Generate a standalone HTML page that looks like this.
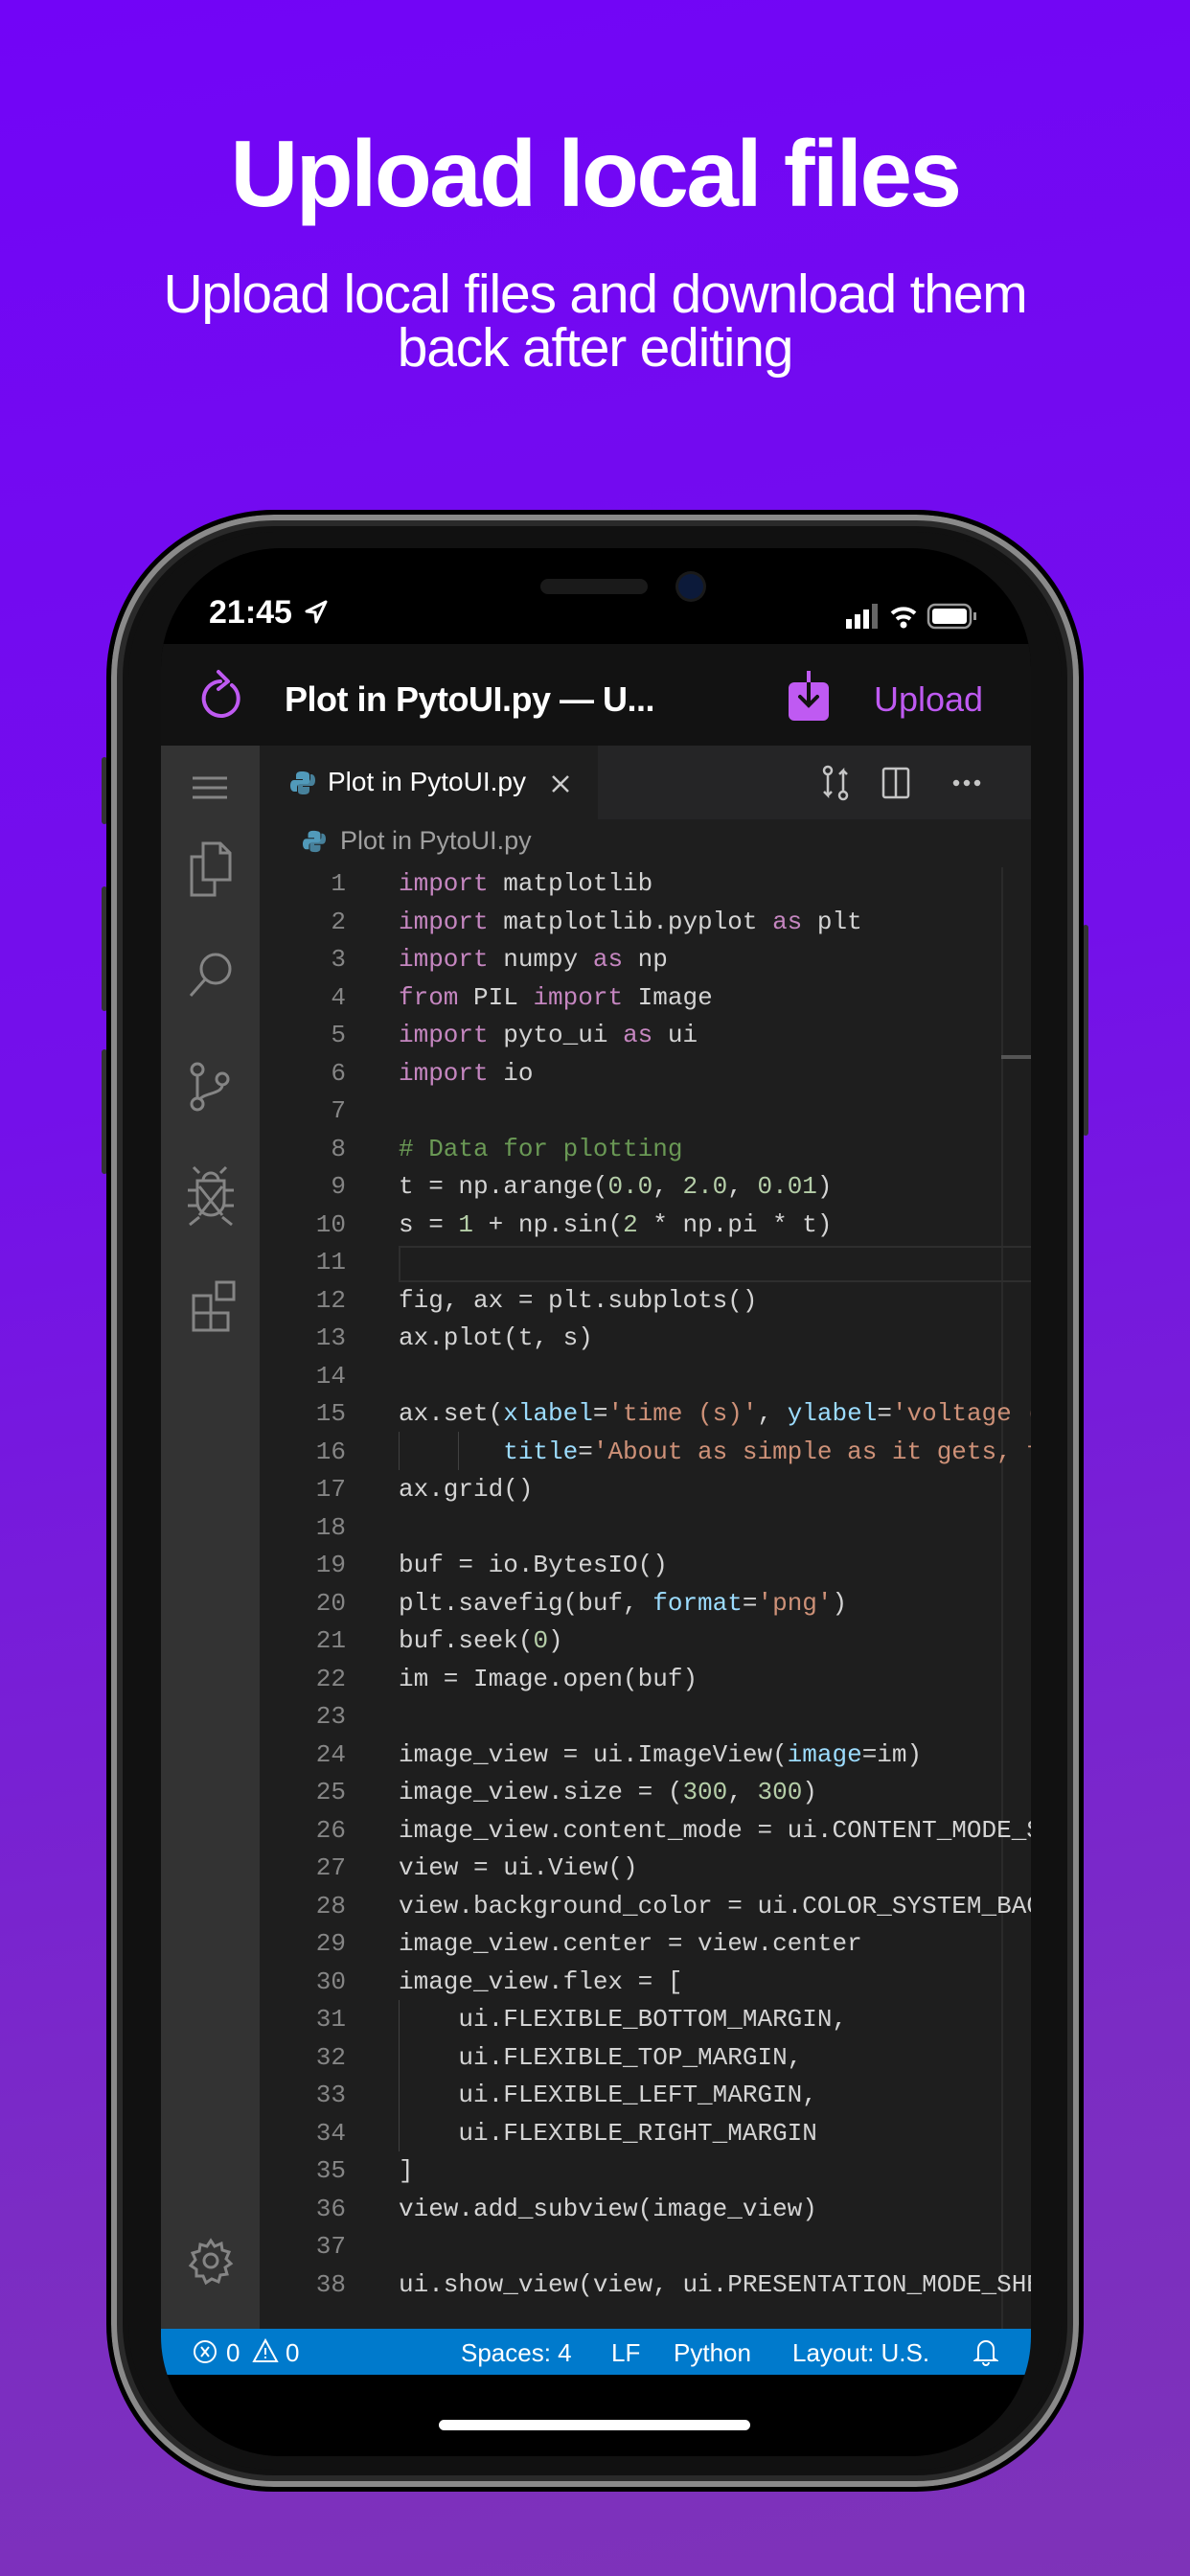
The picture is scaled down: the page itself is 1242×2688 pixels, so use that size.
<!DOCTYPE html>
<html><head><meta charset="utf-8"><style>
*{margin:0;padding:0;box-sizing:border-box}
body{width:1242px;height:2688px;overflow:hidden;position:relative;background:linear-gradient(170deg,#7204f7 0%,#7410ea 40%,#7b2cc4 80%,#7e33b8 100%);font-family:"Liberation Sans",sans-serif}
.abs{position:absolute}
h1{position:absolute;left:0;width:1242px;top:126px;text-align:center;color:#fff;font-size:98px;font-weight:bold;letter-spacing:-2.5px;line-height:110px}
.sub{position:absolute;left:0;width:1242px;top:279px;text-align:center;color:#fff;font-size:57px;line-height:56px;letter-spacing:-1.2px}
.phone{left:111px;top:532px;width:1020px;height:2068px;border-radius:175px;background:#111;border:5px solid #000;box-shadow:inset 0 0 0 6px #8a8a8a,inset 0 0 0 12px #2a2a2a,inset 0 0 0 18px #111}
.screen{left:168px;top:572px;width:908px;height:1991px;border-radius:125px;background:#000;overflow:hidden}
.code{font-family:"Liberation Mono",monospace;font-size:26px;color:#d4d4d4;white-space:pre}
.ln{position:absolute;left:0;width:193px;text-align:right;color:#858585;height:40px;line-height:40px}
.cl{position:absolute;left:248px;height:40px;line-height:40px}
.k{color:#c586c0}.s{color:#ce9178}.p{color:#9cdcfe}.n{color:#b5cea8}.c{color:#6a9955}
.st{color:#fff;font-size:26px;position:absolute;top:14px}
</style></head><body>
<h1>Upload local files</h1>
<div class="sub">Upload local files and download them<br>back after editing</div>
<div class="abs" style="left:106px;top:790px;width:6px;height:70px;background:#333;border-radius:3px"></div>
<div class="abs" style="left:106px;top:925px;width:6px;height:130px;background:#333;border-radius:3px"></div>
<div class="abs" style="left:106px;top:1095px;width:6px;height:130px;background:#333;border-radius:3px"></div>
<div class="abs" style="left:1130px;top:965px;width:6px;height:220px;background:#333;border-radius:3px"></div>
<div class="abs phone"></div>
<div class="abs screen">
  <div class="abs" style="left:224px;top:-10px;width:461px;height:93px;background:#000;border-radius:0 0 50px 50px"></div>
  <div class="abs" style="left:396px;top:32px;width:112px;height:16px;background:#1a1a1a;border-radius:8px"></div>
  <div class="abs" style="left:540px;top:27px;width:26px;height:26px;background:#0c1a3a;border-radius:50%;box-shadow:0 0 0 3px #1a1a1a"></div>
  <div class="abs" style="left:50px;top:48px;color:#fff;font-size:34px;font-weight:bold">21:45</div>
  <svg class="abs" style="left:150px;top:54px" width="24" height="26" viewBox="0 0 24 26"><path d="M22 2 L2 12 L11 13 L12 23 Z" fill="none" stroke="#fff" stroke-width="3" stroke-linejoin="round"/></svg>
  <svg class="abs" style="left:715px;top:56px" width="150" height="30" viewBox="0 0 150 30">
    <rect x="0" y="18" width="6" height="10" fill="#fff"/><rect x="9" y="13" width="6" height="15" fill="#fff"/><rect x="18" y="8" width="6" height="20" fill="#fff"/><rect x="27" y="2" width="6" height="26" fill="#666"/>
    <path d="M48 12 A18 18 0 0 1 72 12" stroke="#fff" stroke-width="4" fill="none"/><path d="M53 18 A11 11 0 0 1 67 18" stroke="#fff" stroke-width="4" fill="none"/><circle cx="60" cy="24" r="3.5" fill="#fff"/>
    <rect x="86" y="3" width="44" height="24" rx="7" fill="none" stroke="#999" stroke-width="2.5"/><rect x="90" y="7" width="36" height="16" rx="3" fill="#fff"/><rect x="133" y="11" width="3" height="8" fill="#999"/>
  </svg>
  <div class="abs" style="left:0;top:100px;width:908px;height:106px;background:#121212"></div>
  <svg class="abs" style="left:38px;top:125px" width="54" height="58" viewBox="0 0 54 58"><path d="M36 18 A18 18 0 1 1 24 14" fill="none" stroke="#bf5af2" stroke-width="4" stroke-linecap="round"/><path d="M22 4 L32 14 L22 22" fill="none" stroke="#bf5af2" stroke-width="4" stroke-linecap="round" stroke-linejoin="round"/></svg>
  <div class="abs" style="left:129px;top:137px;color:#fff;font-size:36px;font-weight:bold;letter-spacing:-0.5px">Plot in PytoUI.py — U...</div>
  <svg class="abs" style="left:653px;top:126px" width="46" height="56" viewBox="0 0 46 56"><rect x="2" y="14" width="42" height="40" rx="6" fill="#bf5af2"/><path d="M23 2 L23 38 M14 29 L23 38 L32 29" stroke="#121212" stroke-width="4" fill="none" stroke-linecap="round"/><path d="M23 2 L23 14" stroke="#bf5af2" stroke-width="4"/></svg>
  <div class="abs" style="left:744px;top:137px;color:#bf5af2;font-size:36px">Upload</div>
  <div class="abs" style="left:0;top:206px;width:908px;height:1652px;background:#1e1e1e"></div>
  <div class="abs" style="left:0;top:206px;width:103px;height:1652px;background:#333"></div>
  <div class="abs" style="left:103px;top:206px;width:805px;height:77px;background:#252526"></div>
  <div class="abs" style="left:103px;top:206px;width:353px;height:77px;background:#1e1e1e"></div>
  <svg class="abs" style="left:0;top:206px" width="103" height="1652" viewBox="0 0 103 1652" fill="none" stroke="#858585" stroke-width="3">
    <path d="M33 34 H69 M33 44 H69 M33 54 H69"/>
    <path d="M44 102 H62 L72 112 V140 H44 Z M62 102 V112 H72 M44 116 H32 V156 H56 V140"/>
    <circle cx="57" cy="233" r="15"/><path d="M46 244 L31 261"/>
    <circle cx="38" cy="338" r="6"/><circle cx="38" cy="374" r="6"/><circle cx="64" cy="348" r="6"/><path d="M38 344 V368 M64 354 C64 364 44 362 40 370"/>
    <g transform="translate(0,40)"><path d="M38 414 H66 V436 A14 14 0 0 1 38 436 Z M44 414 A8 8 0 0 1 60 414 M38 424 H28 M66 424 H76 M38 440 H28 M66 440 H76 M40 452 L30 460 M64 452 L74 460 M40 406 L34 400 M62 406 L68 400 M40 420 L64 450 M64 420 L40 450"/></g>
    <g transform="translate(0,44)"><path d="M34 530 H52 V548 H34 Z M34 548 V566 H52 V548 M52 548 H70 V566 H52 M58 516 H76 V534 H58 Z"/></g>
    <circle cx="52" cy="1581" r="7"/><path d="M52 1560 L56 1566 L63 1563 L64 1570 L71 1572 L68 1579 L73 1584 L67 1588 L69 1595 L62 1596 L60 1603 L53 1600 L47 1604 L44 1597 L37 1597 L37 1590 L31 1586 L36 1580 L33 1573 L40 1571 L41 1564 L48 1566 Z"/>
  </svg>
  <svg class="abs" style="left:135px;top:232px" width="26" height="26" viewBox="0 0 26 26"><path d="M12 1 C6 1 6 4 6 6 V9 H13 V10 H4 C1 10 0 13 0 16 C0 20 2 22 4 22 H7 V18 C7 15 9 14 11 14 H17 C19 14 20 13 20 11 V5 C20 2 17 1 12 1 Z" fill="#519aba"/><path d="M14 25 C20 25 20 22 20 20 V17 H13 V16 H22 C25 16 26 13 26 10 C26 6 24 4 22 4 H21 V8 C21 11 19 12 17 12 H11 C9 12 8 13 8 15 V21 C8 24 9 25 14 25 Z" fill="#519aba" opacity=".8"/></svg>
  <div class="abs" style="left:174px;top:228px;color:#fff;font-size:28px">Plot in PytoUI.py</div>
  <svg class="abs" style="left:407px;top:236px" width="20" height="20"><path d="M2 2 L18 18 M18 2 L2 18" stroke="#ccc" stroke-width="2.5"/></svg>
  <svg class="abs" style="left:690px;top:226px" width="200" height="40" viewBox="0 0 200 40" fill="none" stroke="#c5c5c5" stroke-width="2.5">
    <circle cx="6" cy="6" r="4"/><circle cx="22" cy="32" r="4"/><path d="M6 10 V32 L2 28 M6 32 L10 28 M22 28 V6 L18 10 M22 6 L26 10"/>
    <rect x="64" y="4" width="26" height="30" rx="2"/><path d="M77 4 V34"/>
    <circle cx="140" cy="19" r="2" fill="#c5c5c5"/><circle cx="151" cy="19" r="2" fill="#c5c5c5"/><circle cx="162" cy="19" r="2" fill="#c5c5c5"/>
  </svg>
  <svg class="abs" style="left:148px;top:294px" width="24" height="24" viewBox="0 0 26 26"><path d="M12 1 C6 1 6 4 6 6 V9 H13 V10 H4 C1 10 0 13 0 16 C0 20 2 22 4 22 H7 V18 C7 15 9 14 11 14 H17 C19 14 20 13 20 11 V5 C20 2 17 1 12 1 Z" fill="#519aba"/><path d="M14 25 C20 25 20 22 20 20 V17 H13 V16 H22 C25 16 26 13 26 10 C26 6 24 4 22 4 H21 V8 C21 11 19 12 17 12 H11 C9 12 8 13 8 15 V21 C8 24 9 25 14 25 Z" fill="#519aba" opacity=".8"/></svg>
  <div class="abs" style="left:187px;top:290px;color:#a0a0a0;font-size:27px">Plot in PytoUI.py</div>
  <div class="abs" style="left:877px;top:333px;width:2px;height:1525px;background:#2a2a2a"></div>
  <div class="abs" style="left:877px;top:529px;width:31px;height:4px;background:#555"></div>
  <div class="abs" style="left:248px;top:728px;width:680px;height:38px;border:2px solid #2e2e2e"></div>
  <div class="abs" style="left:248px;top:922px;width:1px;height:40px;background:#404040"></div>
  <div class="abs" style="left:310px;top:922px;width:1px;height:40px;background:#404040"></div>
  <div class="abs" style="left:248px;top:1515px;width:1px;height:158px;background:#404040"></div>
  <div class="code abs" style="left:0;top:330px;width:908px;height:1520px;overflow:hidden">
<div class="ln" style="top:0">1</div><div class="cl" style="top:0"><span class="k">import</span> matplotlib</div>
<div class="ln" style="top:39.5px">2</div><div class="cl" style="top:39.5px"><span class="k">import</span> matplotlib.pyplot <span class="k">as</span> plt</div>
<div class="ln" style="top:79px">3</div><div class="cl" style="top:79px"><span class="k">import</span> numpy <span class="k">as</span> np</div>
<div class="ln" style="top:118.5px">4</div><div class="cl" style="top:118.5px"><span class="k">from</span> PIL <span class="k">import</span> Image</div>
<div class="ln" style="top:158px">5</div><div class="cl" style="top:158px"><span class="k">import</span> pyto_ui <span class="k">as</span> ui</div>
<div class="ln" style="top:197.5px">6</div><div class="cl" style="top:197.5px"><span class="k">import</span> io</div>
<div class="ln" style="top:237px">7</div>
<div class="ln" style="top:276.5px">8</div><div class="cl" style="top:276.5px"><span class="c"># Data for plotting</span></div>
<div class="ln" style="top:316px">9</div><div class="cl" style="top:316px">t = np.arange(<span class="n">0.0</span>, <span class="n">2.0</span>, <span class="n">0.01</span>)</div>
<div class="ln" style="top:355.5px">10</div><div class="cl" style="top:355.5px">s = <span class="n">1</span> + np.sin(<span class="n">2</span> * np.pi * t)</div>
<div class="ln" style="top:395px">11</div>
<div class="ln" style="top:434.5px">12</div><div class="cl" style="top:434.5px">fig, ax = plt.subplots()</div>
<div class="ln" style="top:474px">13</div><div class="cl" style="top:474px">ax.plot(t, s)</div>
<div class="ln" style="top:513.5px">14</div>
<div class="ln" style="top:553px">15</div><div class="cl" style="top:553px">ax.set(<span class="p">xlabel</span>=<span class="s">'time (s)'</span>, <span class="p">ylabel</span>=<span class="s">'voltage (mV)'</span></div>
<div class="ln" style="top:592.5px">16</div><div class="cl" style="top:592.5px">       <span class="p">title</span>=<span class="s">'About as simple as it gets, folks'</span></div>
<div class="ln" style="top:632px">17</div><div class="cl" style="top:632px">ax.grid()</div>
<div class="ln" style="top:671.5px">18</div>
<div class="ln" style="top:711px">19</div><div class="cl" style="top:711px">buf = io.BytesIO()</div>
<div class="ln" style="top:750.5px">20</div><div class="cl" style="top:750.5px">plt.savefig(buf, <span class="p">format</span>=<span class="s">'png'</span>)</div>
<div class="ln" style="top:790px">21</div><div class="cl" style="top:790px">buf.seek(<span class="n">0</span>)</div>
<div class="ln" style="top:829.5px">22</div><div class="cl" style="top:829.5px">im = Image.open(buf)</div>
<div class="ln" style="top:869px">23</div>
<div class="ln" style="top:908.5px">24</div><div class="cl" style="top:908.5px">image_view = ui.ImageView(<span class="p">image</span>=im)</div>
<div class="ln" style="top:948px">25</div><div class="cl" style="top:948px">image_view.size = (<span class="n">300</span>, <span class="n">300</span>)</div>
<div class="ln" style="top:987.5px">26</div><div class="cl" style="top:987.5px">image_view.content_mode = ui.CONTENT_MODE_SCALE</div>
<div class="ln" style="top:1027px">27</div><div class="cl" style="top:1027px">view = ui.View()</div>
<div class="ln" style="top:1066.5px">28</div><div class="cl" style="top:1066.5px">view.background_color = ui.COLOR_SYSTEM_BACKGROUND</div>
<div class="ln" style="top:1106px">29</div><div class="cl" style="top:1106px">image_view.center = view.center</div>
<div class="ln" style="top:1145.5px">30</div><div class="cl" style="top:1145.5px">image_view.flex = [</div>
<div class="ln" style="top:1185px">31</div><div class="cl" style="top:1185px">    ui.FLEXIBLE_BOTTOM_MARGIN,</div>
<div class="ln" style="top:1224.5px">32</div><div class="cl" style="top:1224.5px">    ui.FLEXIBLE_TOP_MARGIN,</div>
<div class="ln" style="top:1264px">33</div><div class="cl" style="top:1264px">    ui.FLEXIBLE_LEFT_MARGIN,</div>
<div class="ln" style="top:1303.5px">34</div><div class="cl" style="top:1303.5px">    ui.FLEXIBLE_RIGHT_MARGIN</div>
<div class="ln" style="top:1343px">35</div><div class="cl" style="top:1343px">]</div>
<div class="ln" style="top:1382.5px">36</div><div class="cl" style="top:1382.5px">view.add_subview(image_view)</div>
<div class="ln" style="top:1422px">37</div>
<div class="ln" style="top:1461.5px">38</div><div class="cl" style="top:1461.5px">ui.show_view(view, ui.PRESENTATION_MODE_SHEET)</div>
  </div>
  <div class="abs" style="left:0;top:1858px;width:908px;height:48px;background:#007acc">
    <svg class="abs" style="left:32px;top:10px" width="28" height="28" viewBox="0 0 28 28"><circle cx="14" cy="14" r="11" fill="none" stroke="#fff" stroke-width="2"/><path d="M10 9 L18 19 M18 9 L10 19" stroke="#fff" stroke-width="2"/></svg>
    <div class="st" style="left:68px;top:10px">0</div>
    <svg class="abs" style="left:95px;top:9px" width="28" height="28" viewBox="0 0 28 28"><path d="M14 3 L26 25 H2 Z" fill="none" stroke="#fff" stroke-width="2"/><path d="M14 11 V18 M14 20 V22" stroke="#fff" stroke-width="2"/></svg>
    <div class="st" style="left:130px;top:10px">0</div>
    <div class="st" style="left:313px;top:10px">Spaces: 4</div>
    <div class="st" style="left:470px;top:10px">LF</div>
    <div class="st" style="left:535px;top:10px">Python</div>
    <div class="st" style="left:659px;top:10px">Layout: U.S.</div>
    <svg class="abs" style="left:848px;top:9px" width="26" height="30" viewBox="0 0 26 30"><path d="M5 22 V12 A8 8 0 0 1 21 12 V22 L24 24 H2 Z M10 26 A3 3 0 0 0 16 26" fill="none" stroke="#fff" stroke-width="2"/></svg>
  </div>
  <div class="abs" style="left:290px;top:1953px;width:325px;height:11px;background:#fff;border-radius:6px"></div>
</div>
</body></html>
